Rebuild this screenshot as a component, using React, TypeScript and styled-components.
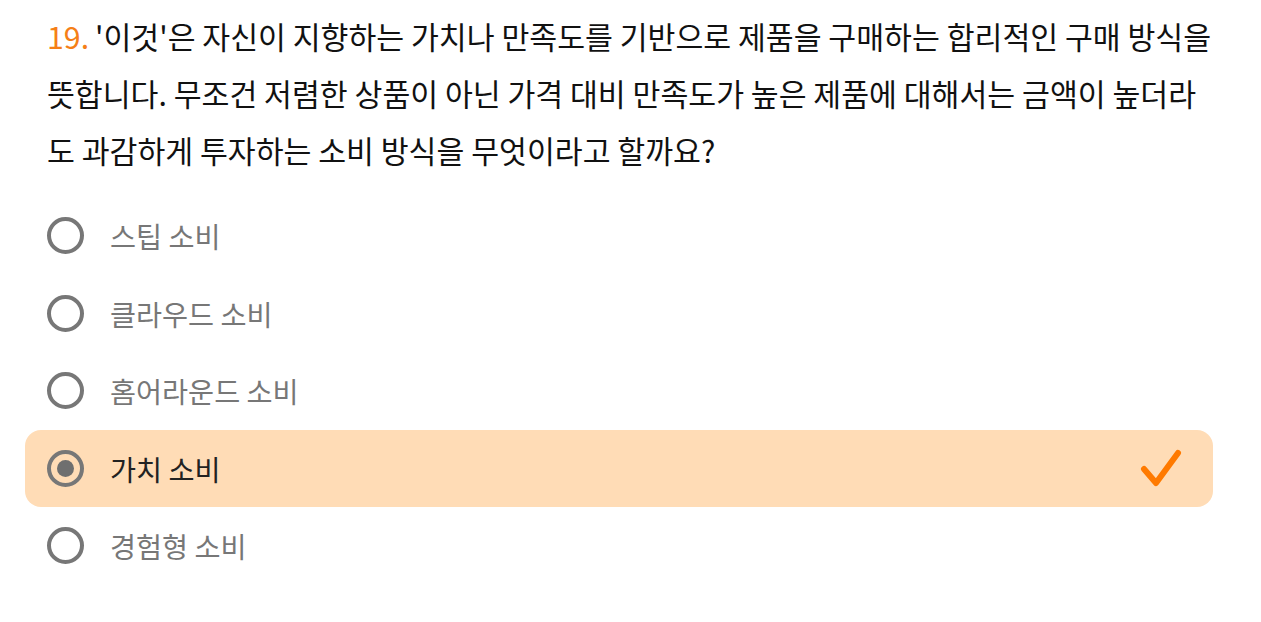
import React from "react";
import styled, { createGlobalStyle } from "styled-components";

const GlobalStyle = createGlobalStyle`
  html, body { margin: 0; padding: 0; background: #ffffff; }
  body { font-family: "Noto Sans CJK KR", "Noto Sans", sans-serif; }
`;

const Page = styled.div`
  width: 1188px;
  padding: 8px 0 0 25px;
  display: flex;
  flex-direction: column;
  gap: 18px;
`;

const Question = styled.p`
  margin: 0;
  padding: 0 0 0 22px;
  font-size: 30.3px;
  line-height: 57px;
  color: #111111;
  font-weight: 400;
  white-space: nowrap;
`;

const Num = styled.span`
  color: #f57f17;
  margin-right: 6px;
`;

const List = styled.div`
  display: flex;
  flex-direction: column;
`;

const Row = styled.div<{ $selected?: boolean }>`
  height: 77.5px;
  display: flex;
  align-items: center;
  padding: 0 29px 0 22px;
  border-radius: 16px;
  background: ${(p) => (p.$selected ? "#ffdcb6" : "transparent")};
`;

const Radio = styled.span<{ $selected?: boolean }>`
  box-sizing: border-box;
  width: 37px;
  height: 37px;
  border-radius: 50%;
  border: 4px solid #777777;
  display: flex;
  align-items: center;
  justify-content: center;
  flex: none;
  &::after {
    content: "";
    width: 17px;
    height: 17px;
    border-radius: 50%;
    background: #6f6f6f;
    display: ${(p) => (p.$selected ? "block" : "none")};
  }
`;

const Label = styled.span<{ $selected?: boolean }>`
  margin-left: 26px;
  font-size: 28.3px;
  color: ${(p) => (p.$selected ? "#222222" : "#777777")};
  flex: 1;
`;

const Check = () => (
  <svg width="46" height="44" viewBox="0 0 46 44" fill="none">
    <path
      d="M6 23 L18 37 L40 7"
      stroke="#ff7a00"
      strokeWidth="6"
      strokeLinecap="round"
      strokeLinejoin="round"
    />
  </svg>
);

const options = ["스팁 소비", "클라우드 소비", "홈어라운드 소비", "가치 소비", "경험형 소비"];
const selected = 3;

export default function App() {
  return (
    <>
      <GlobalStyle />
      <Page>
        <Question>
          <Num>19.</Num>'이것'은 자신이 지향하는 가치나 만족도를 기반으로 제품을 구매하는 합리적인 구매 방식을
          <br />
          뜻합니다. 무조건 저렴한 상품이 아닌 가격 대비 만족도가 높은 제품에 대해서는 금액이 높더라
          <br />
          도 과감하게 투자하는 소비 방식을 무엇이라고 할까요?
        </Question>
        <List>
          {options.map((o, i) => (
            <Row key={o} $selected={i === selected}>
              <Radio $selected={i === selected} />
              <Label $selected={i === selected}>{o}</Label>
              {i === selected && <Check />}
            </Row>
          ))}
        </List>
      </Page>
    </>
  );
}
